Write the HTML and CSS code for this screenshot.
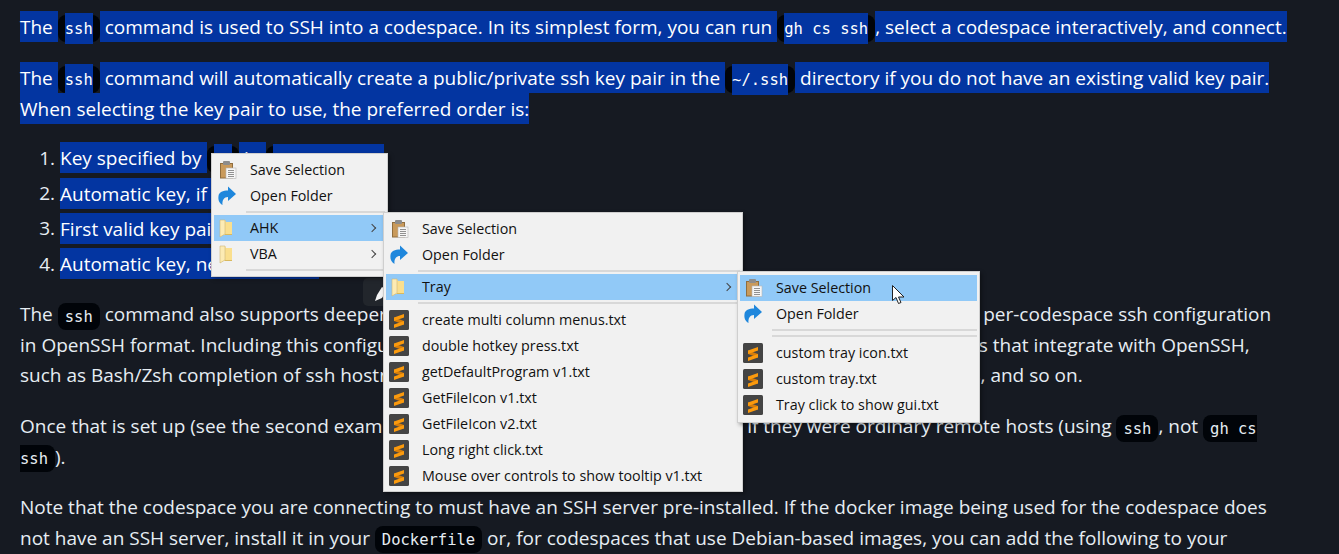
FILE: index.html
```html
<!DOCTYPE html>
<html lang="en">
<head>
  <meta charset="UTF-8" />
  <title>gh codespace ssh</title>
  <link rel="stylesheet" href="styles.css">
</head>
<body>

<svg class="defs" width="0" height="0">
  <defs>
    <symbol id="i-clip" viewBox="0 0 20 20">
      <rect x="3.500" y="3.500" width="12" height="14.500" fill="#c99a5b" stroke="#8f6d3e"/>
      <rect x="6" y="1" width="7" height="4" rx="1" fill="#8c8c8c"/>
      <rect x="9" y="8" width="10" height="10.500" fill="#f6f6f6" stroke="#b5b5b5" stroke-width=".6"/>
      <path d="M11 10.500h6M11 12.500h6M11 14.500h6M11 16.500h6" stroke="#777" stroke-width=".8"/>
    </symbol>
    <symbol id="i-open" viewBox="0 0 20 20">
      <path d="M11 .5L19 8l-8 7v-4C7 11 5 14 5.500 19 2 17 1 14 1.500 10 2 6 6 4.500 11 4.500z" fill="#1f87dc"/>
    </symbol>
    <symbol id="i-folder" viewBox="0 0 20 20">
      <path d="M3 2h5l1 2h6v13H6l-3 2z" fill="#fadf8e"/>
      <path d="M3 2l5 0v14l-5 3z" fill="#fcebb4" stroke="#cdb778" stroke-width=".6"/>
      <path d="M8 16.500h7" stroke="#d9b95e"/>
    </symbol>
    <symbol id="i-sublime" viewBox="0 0 20 20">
      <rect width="20" height="20" rx="1.500" fill="#444"/>
      <path d="M5 7.500L15 11v3.500L5 11z" fill="#d67d0a"/>
      <path d="M15 4v3.500L5 11V7.500zM15 11v3.500L5 18v-3.500z" fill="#fb9a0d"/>
    </symbol>
  </defs>
</svg>

<main class="doc">
  <p><span class="sel">The </span><code><span class="sel">ssh</span></code><span class="sel"> command is used to SSH into a codespace. In its simplest form, you can run </span><code><span class="sel">gh cs ssh</span></code><span class="sel">, select a codespace interactively, and connect.</span></p>

  <p><span class="sel">The </span><code><span class="sel">ssh</span></code><span class="sel"> command will automatically create a public/private ssh key pair in the </span><code><span class="sel">~/.ssh</span></code><span class="sel"> directory if you do not have an existing valid key pair.<br>When selecting the key pair to use, the preferred order is:</span></p>

  <ol>
    <li><span class="sel">Key specified by </span><code><span class="sel">-i</span></code><span class="sel"> in </span><code><span class="sel">&lt;ssh-option&gt;</span></code></li>
    <li><span class="sel">Automatic key, if it already exists</span></li>
    <li><span class="sel">First valid key pair in ssh config (according to ssh -G)</span></li>
    <li><span class="sel">Automatic key, newly created</span></li>
  </ol>

  <p>The <code>ssh</code> command also supports deeper integration with OpenSSH using a <code>--config</code> option that generates per-codespace ssh configuration in OpenSSH format. Including this configuration in your <code>~/.ssh/config</code> improves the user experience of tools that integrate with OpenSSH, such as Bash/Zsh completion of ssh hostnames, remote path completion for scp/rsync/sshfs, git ssh remotes, and so on.</p>

  <p>Once that is set up (see the second example below), you can ssh to codespaces as if they were ordinary remote hosts (using <code>ssh</code>, not <code>gh cs ssh</code>).</p>

  <p>Note that the codespace you are connecting to must have an SSH server pre-installed. If the docker image being used for the codespace does not have an SSH server, install it in your <code>Dockerfile</code> or, for codespaces that use Debian-based images, you can add the following to your</p>
</main>

<div class="toolbar-chip">
  <svg width="14" height="16" viewBox="0 0 14 16"><path d="M1 15l2-6 5-8 5 3-5 8z" fill="#f4f4f4"/></svg>
</div>

<div class="menu menu-root">
  <div class="row"><svg class="ico"><use href="#i-clip"/></svg><span>Save Selection</span></div>
  <div class="row"><svg class="ico"><use href="#i-open"/></svg><span>Open Folder</span></div>
  <div class="sep"></div>
  <div class="row active"><svg class="ico"><use href="#i-folder"/></svg><span>AHK</span><i class="arrow"></i></div>
  <div class="row"><svg class="ico"><use href="#i-folder"/></svg><span>VBA</span><i class="arrow"></i></div>
  <div class="sep"></div>
</div>

<div class="menu menu-ahk">
  <div class="row"><svg class="ico"><use href="#i-clip"/></svg><span>Save Selection</span></div>
  <div class="row"><svg class="ico"><use href="#i-open"/></svg><span>Open Folder</span></div>
  <div class="sep"></div>
  <div class="row active"><svg class="ico"><use href="#i-folder"/></svg><span>Tray</span><i class="arrow"></i></div>
  <div class="sep sep-wide"></div>
  <div class="row"><svg class="ico"><use href="#i-sublime"/></svg><span>create multi column menus.txt</span></div>
  <div class="row"><svg class="ico"><use href="#i-sublime"/></svg><span>double hotkey press.txt</span></div>
  <div class="row"><svg class="ico"><use href="#i-sublime"/></svg><span>getDefaultProgram v1.txt</span></div>
  <div class="row"><svg class="ico"><use href="#i-sublime"/></svg><span>GetFileIcon v1.txt</span></div>
  <div class="row"><svg class="ico"><use href="#i-sublime"/></svg><span>GetFileIcon v2.txt</span></div>
  <div class="row"><svg class="ico"><use href="#i-sublime"/></svg><span>Long right click.txt</span></div>
  <div class="row"><svg class="ico"><use href="#i-sublime"/></svg><span>Mouse over controls to show tooltip v1.txt</span></div>
</div>

<div class="menu menu-tray">
  <div class="row active"><svg class="ico"><use href="#i-clip"/></svg><span>Save Selection</span></div>
  <div class="row"><svg class="ico"><use href="#i-open"/></svg><span>Open Folder</span></div>
  <div class="sep"></div>
  <div class="sep sep-wide"></div>
  <div class="row"><svg class="ico"><use href="#i-sublime"/></svg><span>custom tray icon.txt</span></div>
  <div class="row"><svg class="ico"><use href="#i-sublime"/></svg><span>custom tray.txt</span></div>
  <div class="row"><svg class="ico"><use href="#i-sublime"/></svg><span>Tray click to show gui.txt</span></div>
</div>

<svg class="cursor" width="13" height="20" viewBox="0 0 13 20">
  <path d="M.5.5v15l3.500-3 2.500 6 2.500-1-2.500-5.500H12z" fill="#fff" stroke="#222"/>
</svg>

</body>
</html>
```

FILE: styles.css
```css
html, body {
  height: 100%;
}
body {
  margin: 0;
  overflow: hidden;
  background-color: #161a22;
  color: #e6edf3;
  font-family: "Open Sans", "Noto Sans", sans-serif;
  font-size: 19px;
  line-height: 30.6px;
}
.defs {
  position: absolute;
}
.doc {
  padding: 11px 49px 0 20px;
}
p {
  margin: 0 0 20px;
}
.doc p:first-child {
  margin-bottom: 21px;
}
ol {
  margin: -1px 0 20px;
  padding-left: 40px;
}
li + li {
  margin-top: 4.700px;
}
li code:last-child {
  padding-right: 0;
}
.sel {
  background-color: #0335a1;
  color: #fff;
  padding: 2.500px 0;
}
code {
  font-family: "DejaVu Sans Mono", "Liberation Mono", monospace;
  font-size: 15.500px;
  line-height: 1;
  background-color: #010409;
  color: #e6edf3;
  padding: 4.500px 7px;
  border-radius: 8px;
}
code .sel {
  padding: 6.500px 0;
}
.menu {
  position: absolute;
  box-sizing: border-box;
  padding: 3px 2px 2px;
  background-color: #f1f1f1;
  border: 1px solid #cfcfcf;
  box-shadow: 2px 2px 4px rgba(0, 0, 0, 0.35);
  color: #111;
  font-size: 14.300px;
  line-height: 26px;
}
.menu-root {
  left: 211px;
  top: 153px;
  width: 177px;
  height: 124px;
}
.menu-ahk {
  left: 383px;
  top: 212px;
  width: 360px;
  height: 280px;
}
.menu-tray {
  left: 737px;
  top: 271px;
  width: 243px;
  height: 152px;
}
.row {
  display: flex;
  align-items: center;
  height: 26px;
  padding-left: 36px;
  position: relative;
}
.row.active {
  background-color: #91c9f7;
}
.ico {
  position: absolute;
  left: 3px;
  top: 3px;
  width: 20px;
  height: 20px;
}
.arrow {
  position: absolute;
  right: 10px;
  top: 10px;
  width: 5px;
  height: 5px;
  border-top: 1px solid #444;
  border-right: 1px solid #444;
  transform: rotate(45deg);
}
.sep {
  height: 2px;
  margin: 2px 0 2px 32px;
  background-color: #d8d8d8;
}
.sep + .sep {
  margin-top: 4px;
}
.sep-wide {
  margin-bottom: 3px;
}
.toolbar-chip {
  position: absolute;
  left: 363px;
  top: 278px;
  width: 30px;
  height: 28px;
  display: flex;
  padding: 8px 0 0 11px;
  box-sizing: border-box;
  background-color: #22262c;
  border-radius: 5px;
}
.cursor {
  position: absolute;
  left: 892px;
  top: 285px;
}
```
